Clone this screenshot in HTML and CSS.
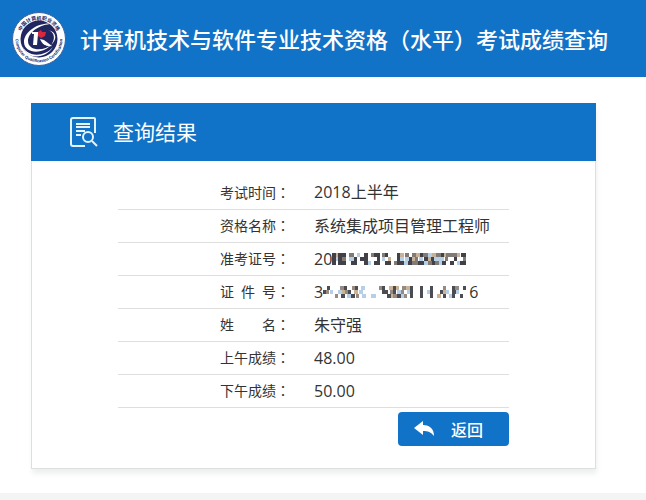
FILE: index.html
```
<!DOCTYPE html>
<html lang="zh-CN">
<head>
  <meta charset="UTF-8">
  <meta name="viewport" content="width=device-width, initial-scale=1">
  <title>考试成绩查询</title>
  <link rel="stylesheet" href="styles.css">
</head>
<body>
  <header class="top">
    <svg class="logo" viewBox="0 0 54 54" aria-hidden="true">
      <defs>
        <path id="arc-top" d="M7.5 27a19.5 19.5 0 0 1 39 0"/>
        <path id="arc-bottom" d="M4 22a23.5 23.5 0 1 0 46 0"/>
      </defs>
      <circle cx="27" cy="27" r="26.5" fill="#fff" stroke="#3a62a0"/>
      <circle cx="27" cy="27" r="18.5" fill="#20265f"/>
      <text class="ring-cn" text-anchor="middle"><textPath href="#arc-top" startOffset="50%">中国计算机职业资格</textPath></text>
      <text class="ring-en" text-anchor="middle"><textPath href="#arc-bottom" startOffset="50%">Computer Qualification Certification</textPath></text>
      <path d="M42 12C28 9 12 19 12 30c0 11 17 13 26 4 6-6 5-14-2-16 9 2 9 9 4 14-8 8-24 7-24-3C16 20 29 11 42 12z" fill="#fff"/>
      <path d="M10 32c2 12 21 15 31 3-7 12-28 14-31-3z" fill="#fff"/>
      <path d="M20 20h8l-1 2h-1l-1 11h-4l1-11h-2z" fill="#fff"/>
      <path d="M28 27l4 1 8 6c-6 1-10-2-12-7z" fill="#fff"/>
      <path d="M26 20l3-2 1 2 4 0-1 4-4 2-3-2z" fill="#d9283c"/>
    </svg>
    <h1>计算机技术与软件专业技术资格（水平）考试成绩查询</h1>
  </header>

  <main>
    <section class="card">
      <div class="card-title">
        <svg class="search-icon" viewBox="0 0 28 30" aria-hidden="true">
          <path d="M15 29H3q-2 0-2-2V3q0-2 2-2h21q1 0 1 1v14"/>
          <path d="M6 7h14M6 10h14M6 14h9M6 18h5"/>
          <circle cx="18" cy="20" r="5"/>
          <path d="M22 24l5 5"/>
        </svg>
        <h2>查询结果</h2>
      </div>

      <div class="result">
        <table>
          <tbody>
            <tr>
              <th scope="row"><span class="label">考试时间</span><span class="colon">：</span></th>
              <td>2018上半年</td>
            </tr>
            <tr>
              <th scope="row"><span class="label">资格名称</span><span class="colon">：</span></th>
              <td>系统集成项目管理工程师</td>
            </tr>
            <tr>
              <th scope="row"><span class="label">准考证号</span><span class="colon">：</span></th>
              <td>
                <div class="masked">
                  <span>20</span>
                  <svg class="mosaic" width="136" height="12" viewBox="0 0 136 12" aria-hidden="true">
                    <path stroke="#414147" d="M0 2h4M0 6h4M0 10h4M6 2h8M6 6h4M6 10h8M19 10h6M22 6h3M32 2h4M28 6h8M32 10h4M42 2h6M45 6h3M42 10h6M53 2h3M53 10h6M65 2h3M65 6h3M65 10h7M77 6h3M76 10h4M88 2h3M86 10h6M92 6h4M100 10h3M99 6h3M109 2h3M110 10h4M118 10h4M122 6h3M129 2h5M128 10h6"/>
                    <path stroke="#827a75" d="M10 6h4M17 2h5M39 2h3M50 2h3M62 10h3M73 2h4M80 2h4M83 6h3M80 10h6M91 2h5M96 10h4M104 2h5M103 10h4M114 2h4M113 6h3M118 2h4M122 2h3M131 6h3"/>
                    <path stroke="#b5cfe8" d="M4 6h2M17 6h5M25 2h3M36 10h3M50 6h3M68 6h4M72 10h4M73 6h4M87 6h4M96 2h4M92 10h4M102 6h6M107 10h3M108 6h4M125 10h3"/>
                    <path stroke="#c7b197" d="M4 2h2M56 6h3M68 2h4M80 6h3M84 2h4M100 2h4M96 6h3M112 2h2M125 2h3"/>
                  </svg>
                </div>
              </td>
            </tr>
            <tr>
              <th scope="row"><span class="label">证 件 号</span><span class="colon">：</span></th>
              <td>
                <div class="masked">
                  <span>3</span>
                  <svg class="mosaic" width="146" height="12" viewBox="0 0 146 12" aria-hidden="true">
                    <path stroke="#4b4d53" d="M0 6h3M4 2h3M21 2h3M18 10h4M25 6h3M28 10h4M32 2h3M59 2h3M59 6h6M64 10h4M70 2h3M70 6h3M74 10h4M87 2h3M87 6h3M87 10h3M97 2h3M97 6h3M97 10h3M107 2h3M107 6h3M107 10h3M117 6h3M120 10h3M129 2h3M129 6h4M129 10h3M140 2h3M137 10h3"/>
                    <path stroke="#958b83" d="M3 6h3M12 10h3M17 2h4M22 6h3M29 2h3M33 10h3M56 2h3M67 6h3M70 10h4M78 6h3M79 2h4M81 10h3M120 2h3M132 2h4"/>
                    <path stroke="#b5cfe8" d="M7 6h3M15 6h4M24 10h4M38 2h4M36 6h4M39 10h4M48 10h5M74 6h4M78 10h3M84 6h3M104 6h3M123 6h3M126 10h3M133 6h3"/>
                    <path stroke="#cbb397" d="M19 6h3M31 6h4M66 2h4M73 2h3M68 10h2M83 2h4M114 10h4M120 6h3"/>
                  </svg>
                  <span>6</span>
                </div>
              </td>
            </tr>
            <tr>
              <th scope="row"><span class="label">姓 名</span><span class="colon">：</span></th>
              <td>朱守强</td>
            </tr>
            <tr>
              <th scope="row"><span class="label">上午成绩</span><span class="colon">：</span></th>
              <td>48.00</td>
            </tr>
            <tr>
              <th scope="row"><span class="label">下午成绩</span><span class="colon">：</span></th>
              <td>50.00</td>
            </tr>
          </tbody>
        </table>

        <div class="actions">
          <button type="button" class="back">
            <svg width="21" height="16" viewBox="0 0 21 16" aria-hidden="true">
              <path d="M0 7L9 0v4c7 0 11 4 11 11-3-4-6-5-11-5v4z" fill="#fff"/>
            </svg>
            <span>返回</span>
          </button>
        </div>
      </div>
    </section>
  </main>

  <footer class="bottom"></footer>
</body>
</html>
```

FILE: styles.css
```
* {
  box-sizing: border-box;
}

body {
  display: flex;
  flex-direction: column;
  min-height: 100vh;
  margin: 0;
  background-color: #fff;
  color: #333;
  font-family: "Open Sans", "Noto Sans CJK SC", sans-serif;
}

h1, h2 {
  margin: 0;
  color: #fff;
}

.top {
  display: flex;
  align-items: center;
  gap: 14px;
  height: 77px;
  padding: 0 12px;
  background-color: #1173c7;
}

.logo {
  flex: none;
  width: 54px;
  height: 54px;
}

.ring-cn {
  font-size: 5px;
  font-weight: bold;
  fill: #20265f;
}

.ring-en {
  font-size: 4px;
  font-weight: bold;
  fill: #20265f;
}

h1 {
  font-size: 22px;
  font-weight: 500;
  line-height: 32px;
  white-space: nowrap;
}

main {
  padding: 26px 50px 24px 31px;
}

.card {
  border: 1px solid #dcdfe0;
  border-top: 0;
  box-shadow: 1px 5px 5px #eef0f0;
}

.card-title {
  display: flex;
  align-items: center;
  gap: 15px;
  height: 58px;
  margin: 0 -1px;
  padding-left: 39px;
  background-color: #1173c7;
}

.search-icon {
  width: 28px;
  height: 30px;
  fill: none;
  stroke: #e4f4ff;
  stroke-width: 2;
}

h2 {
  font-size: 21px;
  font-weight: normal;
  line-height: 30px;
}

.result {
  padding: 15px 86px 22px;
}

table {
  width: 100%;
  border-collapse: collapse;
}

th, td {
  height: 33px;
  padding: 0;
  border-bottom: 1px solid #dedede;
  line-height: 24px;
  text-align: left;
}

th {
  width: 44%;
  font-size: 14px;
  font-weight: normal;
  text-align: right;
  white-space: nowrap;
}

td {
  padding-left: 24px;
  font-size: 16px;
}

.label {
  display: inline-block;
  width: 56px;
  text-align-last: justify;
}

.colon {
  font-family: "Noto Sans CJK TC", sans-serif;
}

.masked {
  display: flex;
  align-items: center;
}

.mosaic {
  fill: none;
  stroke-width: 4;
}

.actions {
  display: flex;
  justify-content: flex-end;
  margin-top: 4px;
}

.back {
  display: flex;
  align-items: center;
  gap: 16px;
  width: 111px;
  height: 34px;
  padding: 0 16px;
  border: 0;
  border-radius: 4px;
  background-color: #1173c7;
  color: #fff;
  font-family: inherit;
  font-size: 16px;
  font-weight: 500;
  cursor: pointer;
}

.bottom {
  flex: 1;
  background-color: #f3f4f4;
}
```
